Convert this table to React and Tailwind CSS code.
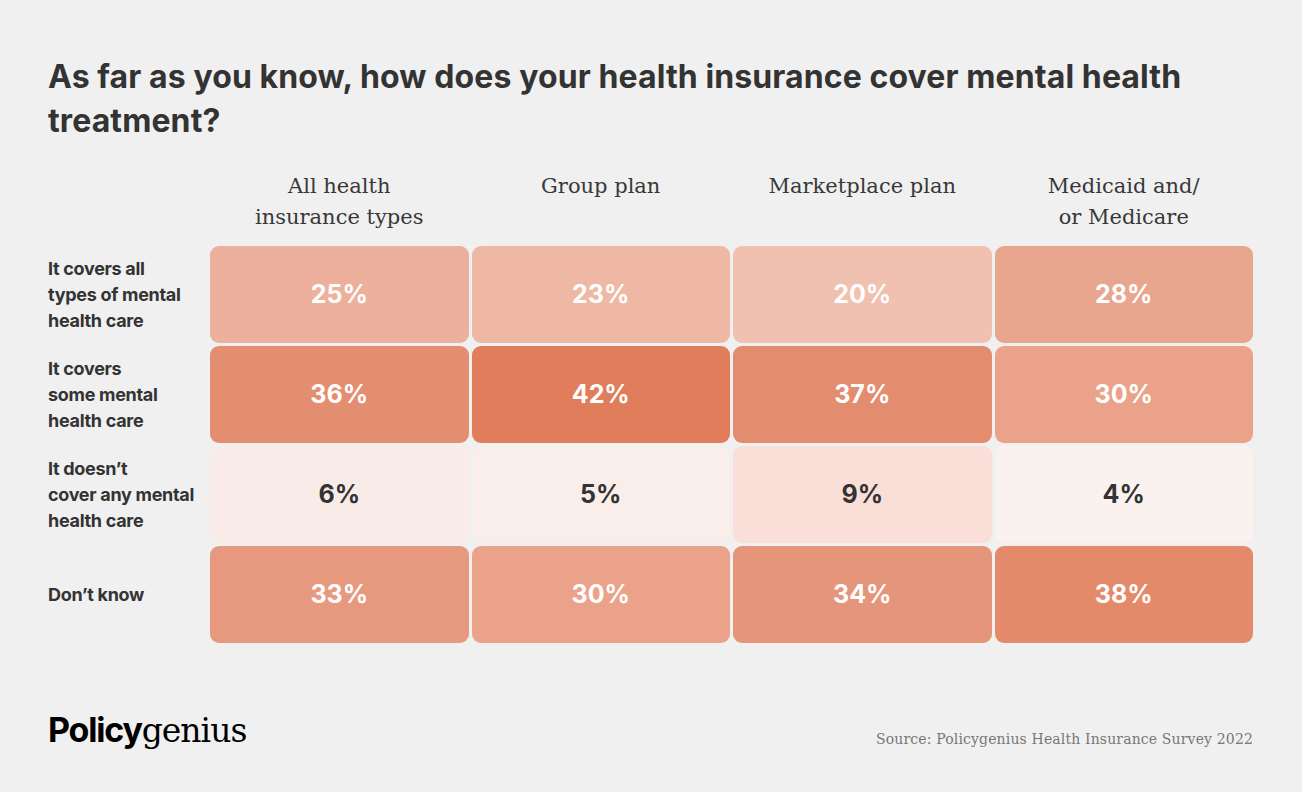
const columns = [
  ['All health', 'insurance types'],
  ['Group plan'],
  ['Marketplace plan'],
  ['Medicaid and/', 'or Medicare'],
]

const rows = [
  {
    label: ['It covers all', 'types of mental', 'health care'],
    cells: [
      { v: '25%', bg: 'bg-[#edb09c]', dark: false },
      { v: '23%', bg: 'bg-[#efb8a5]', dark: false },
      { v: '20%', bg: 'bg-[#f0c1b0]', dark: false },
      { v: '28%', bg: 'bg-[#e9a68e]', dark: false },
    ],
  },
  {
    label: ['It covers', 'some mental', 'health care'],
    cells: [
      { v: '36%', bg: 'bg-[#e38d71]', dark: false },
      { v: '42%', bg: 'bg-[#e07d5b]', dark: false },
      { v: '37%', bg: 'bg-[#e38c70]', dark: false },
      { v: '30%', bg: 'bg-[#eaa38a]', dark: false },
    ],
  },
  {
    label: ['It doesn\u2019t', 'cover any mental', 'health care'],
    cells: [
      { v: '6%', bg: 'bg-[#f9ebe7]', dark: true },
      { v: '5%', bg: 'bg-[#f9eeea]', dark: true },
      { v: '9%', bg: 'bg-[#f9dfd8]', dark: true },
      { v: '4%', bg: 'bg-[#faf2ee]', dark: true },
    ],
  },
  {
    label: ['Don\u2019t know'],
    cells: [
      { v: '33%', bg: 'bg-[#e6997e]', dark: false },
      { v: '30%', bg: 'bg-[#eaa38a]', dark: false },
      { v: '34%', bg: 'bg-[#e59579]', dark: false },
      { v: '38%', bg: 'bg-[#e4896a]', dark: false },
    ],
  },
]

const sans = "font-['Inter','Liberation_Sans',sans-serif]"
const serif = "font-['DejaVu_Serif','Liberation_Serif',serif]"

export default function App() {
  return (
    <div className="w-[1302px] h-[792px] bg-[#f0f0f0] text-[#333333] pl-12 pr-[49px] pt-[55px] flex flex-col">
      <h1 className={`${sans} text-[32px] leading-[44px] font-bold tracking-[0.1px] max-w-[1200px]`}>
        As far as you know, how does your health insurance cover mental health treatment?
      </h1>

      <div className="grid grid-cols-[159px_repeat(4,1fr)] gap-x-[3px] gap-y-[3px] mt-[28px]">
        <div />
        {columns.map((c, i) => (
          <div key={i} className={`${serif} text-[21px] leading-[31px] text-center text-[#383838] h-[63px] mb-[9px]`}>
            {c.map((line, j) => (
              <div key={j}>{line}</div>
            ))}
          </div>
        ))}

        {rows.map((r, i) => (
          <div key={i} className="contents">
            <div className={`${sans} font-bold text-[18px] leading-[26px] tracking-[-0.3px] flex flex-col justify-center h-[97px]`}>
              {r.label.map((line, j) => (
                <div key={j}>{line}</div>
              ))}
            </div>
            {r.cells.map((c, j) => (
              <div
                key={j}
                className={`${c.bg} rounded-[9px] h-[97px] flex items-center justify-center ${sans} font-bold text-[25px] ${c.dark ? 'text-[#333333]' : 'text-white'}`}
              >
                {c.v}
              </div>
            ))}
          </div>
        ))}
      </div>

      <div className="flex items-end justify-between mt-auto mb-[37px]">
        <div className="flex items-baseline text-black">
          <span className={`${sans} font-bold text-[34px] tracking-[-1.2px]`}>Policy</span>
          <span className={`${serif} text-[33px] tracking-[-1px]`}>genius</span>
        </div>
        <div className={`${serif} text-[14px] tracking-[0.15px] text-[#777777] mb-[5px]`}>
          Source: Policygenius Health Insurance Survey 2022
        </div>
      </div>
    </div>
  )
}
